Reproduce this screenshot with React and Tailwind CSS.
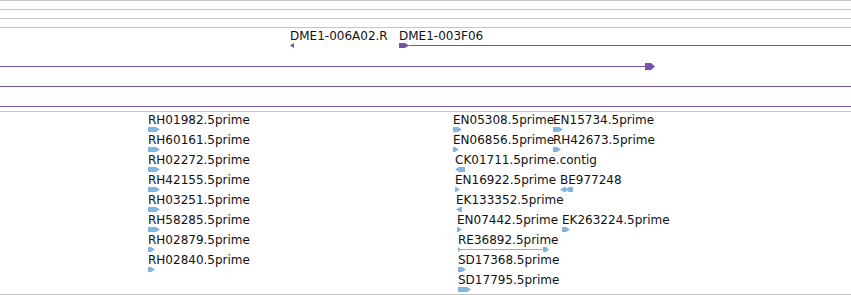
const PURPLE = "#7453a9";
const BLUE = "#80b4e1";

// small feature glyphs, drawn on the track canvas
const Glyph = ({ kind, w = 10, h = 5, color = BLUE }) => {
  if (kind === "left") {
    return (
      <svg width={w} height={h} className="block">
        <polygon points={`0,${h / 2} ${Math.min(4, w)},0 ${w},0 ${w},${h} ${Math.min(4, w)},${h}`} fill={color} />
      </svg>
    );
  }
  if (kind === "dleft") {
    return (
      <svg width={w} height={h} className="block">
        <polygon points={`0,${h / 2} 4,0 6,0 6,${h} 4,${h}`} fill={color} />
        <polygon points={`5,${h / 2} 9,0 ${w},0 ${w},${h} 9,${h}`} fill={color} />
      </svg>
    );
  }
  if (kind === "span") {
    return (
      <svg width={w} height={h} className="block">
        <polygon points={`0,0 3,${h / 2} 0,${h}`} fill={color} />
        <line x1="0" y1={h / 2} x2={w - 5} y2={h / 2} stroke={color} strokeWidth="1" />
        <polygon points={`${w - 6},0 ${w - 3},0 ${w},${h / 2} ${w - 3},${h} ${w - 6},${h}`} fill={color} />
      </svg>
    );
  }
  return (
    <svg width={w} height={h} className="block">
      <polygon points={`0,0 ${Math.max(w - 4, 1)},0 ${w},${h / 2} ${Math.max(w - 4, 1)},${h} 0,${h}`} fill={color} />
    </svg>
  );
};

const Feature = ({ x, row, label, kind, w }) => (
  <div className="absolute" style={{ left: x, top: 1 + row * 20 }}>
    <div className="leading-[14px] whitespace-nowrap">{label}</div>
    <Glyph kind={kind} w={w} h={5} />
  </div>
);

const ests = [
  ["RH01982.5prime", 148, 0, "right", 12],
  ["RH60161.5prime", 148, 1, "right", 12],
  ["RH02272.5prime", 148, 2, "right", 12],
  ["RH42155.5prime", 148, 3, "right", 12],
  ["RH03251.5prime", 148, 4, "right", 12],
  ["RH58285.5prime", 148, 5, "right", 12],
  ["RH02879.5prime", 148, 6, "right", 7],
  ["RH02840.5prime", 148, 7, "right", 7],
  ["EN05308.5prime", 453, 0, "right", 9],
  ["EN15734.5prime", 553, 0, "right", 10],
  ["EN06856.5prime", 453, 1, "right", 6],
  ["RH42673.5prime", 553, 1, "right", 8],
  ["CK01711.5prime.contig", 455, 2, "left", 10],
  ["EN16922.5prime", 455, 3, "right", 5],
  ["BE977248", 560, 3, "dleft", 13],
  ["EK133352.5prime", 456, 4, "left", 6],
  ["EN07442.5prime", 457, 5, "right", 5],
  ["EK263224.5prime", 562, 5, "right", 8],
  ["RE36892.5prime", 458, 6, "span", 91],
  ["SD17368.5prime", 458, 7, "right", 8],
  ["SD17795.5prime", 458, 8, "right", 13],
];

export default function App() {
  return (
    <div
      className="w-[851px] h-[295px] bg-white overflow-hidden text-[12px] text-[#111]"
      style={{ fontFamily: '"DejaVu Sans", sans-serif' }}
    >
      <div className="h-[9px] border-t border-[#c4c4c4]" />
      <div className="h-[9px] border-t border-[#c4c4c4]" />
      <div className="h-[9px] border-t border-[#c4c4c4]" />

      {/* clone track */}
      <div className="relative h-[84px] border-t border-[#c4c4c4]">
        <div className="absolute left-[290px] top-px leading-[14px]">DME1-006A02.R</div>
        <div className="absolute left-[290px] top-[15px]">
          <svg width="5" height="5" className="block">
            <polygon points="0,2.5 4,0 4,5" fill={PURPLE} />
          </svg>
        </div>
        <div className="absolute left-[399px] top-px leading-[14px]">DME1-003F06</div>
        <div className="absolute left-[399px] right-0 top-[15px] flex items-center">
          <svg width="10" height="5" className="block shrink-0">
            <polygon points="0,0 6,0 10,2.5 6,5 0,5" fill={PURPLE} />
          </svg>
          <div className="flex-1 h-px" style={{ background: PURPLE }} />
        </div>
        <div className="absolute left-0 top-[35px] w-[655px] flex items-center h-[7px]">
          <div className="flex-1 h-px" style={{ background: PURPLE }} />
          <svg width="10" height="7" className="block shrink-0">
            <polygon points="0,0 6,0 10,3.5 6,7 0,7" fill={PURPLE} />
          </svg>
        </div>
        <div className="absolute left-0 right-0 top-[58px] h-px" style={{ background: PURPLE }} />
        <div className="absolute left-0 right-0 top-[78px] h-px" style={{ background: PURPLE }} />
      </div>

      {/* EST track */}
      <div className="relative h-[184px] border-t border-b border-[#c4c4c4]">
        {ests.map(([label, x, row, kind, w]) => (
          <Feature key={label} label={label} x={x} row={row} kind={kind} w={w} />
        ))}
      </div>
    </div>
  );
}
